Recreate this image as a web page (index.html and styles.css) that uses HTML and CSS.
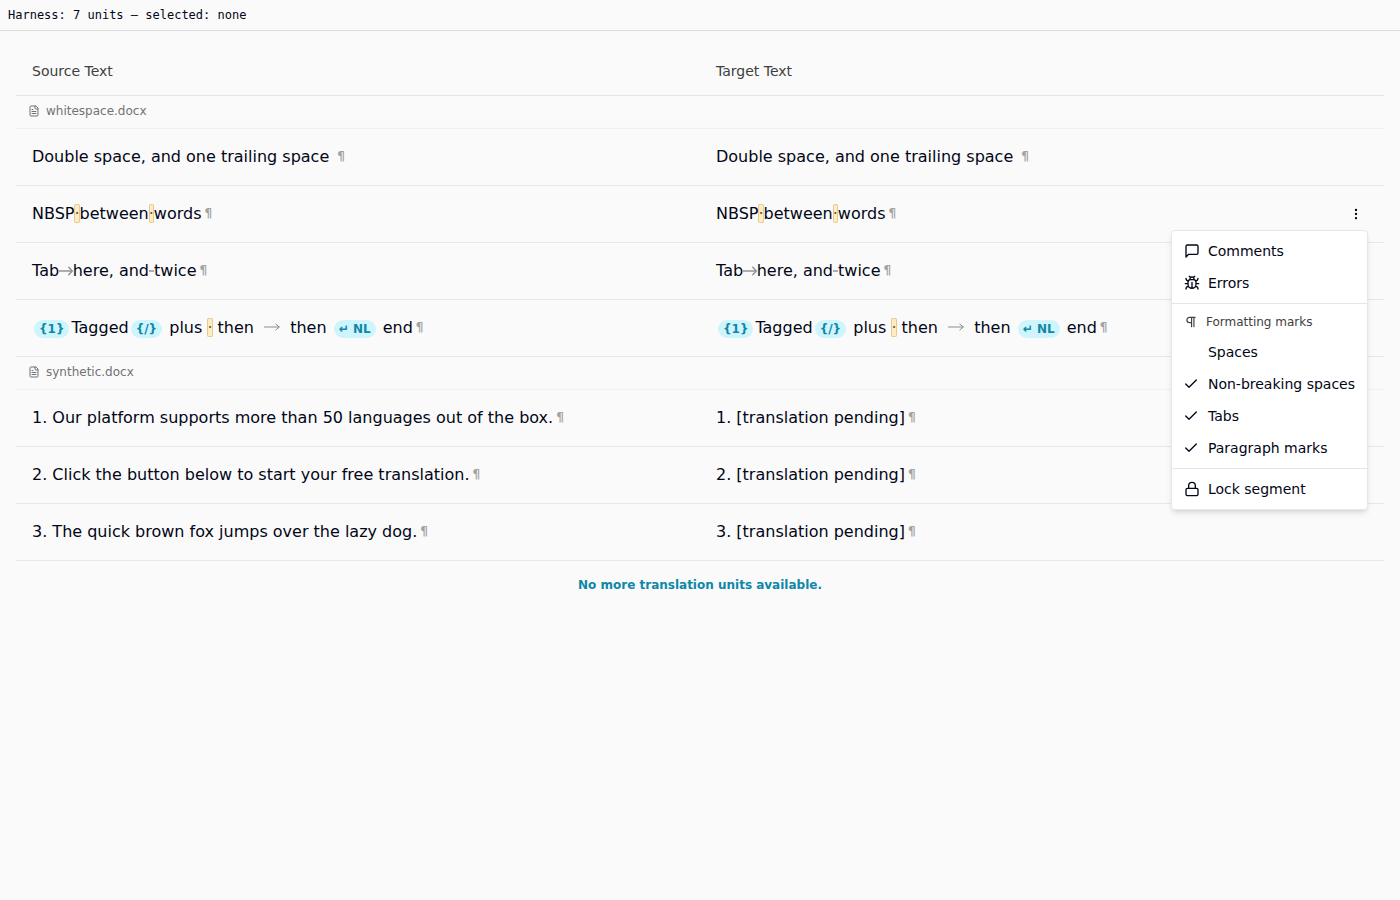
FILE: index.html
```html
<!DOCTYPE html>
<html lang="en">
<head>
<meta charset="utf-8">
<meta name="viewport" content="width=device-width, initial-scale=1">
<title>Translation units</title>
<link rel="stylesheet" href="styles.css">
</head>
<body>
<svg class="sprite" aria-hidden="true">
  <symbol id="file" viewBox="0 0 24 24"><path d="M15 2H6a2 2 0 0 0-2 2v16a2 2 0 0 0 2 2h12a2 2 0 0 0 2-2V7Z"/><path d="M14 2v4a2 2 0 0 0 2 2h4M10 9H8M16 13H8M16 17H8"/></symbol>
  <symbol id="check" viewBox="0 0 24 24"><path d="M20 6 9 17l-5-5"/></symbol>
  <symbol id="arrow" viewBox="0 0 16 8"><path d="M0.5 4H15.2M11.8 1 15.2 4 11.8 7"/></symbol>
  <symbol id="tab-arrow" viewBox="0 0 16 10"><path d="M0 5H14.3M10.8 1.2 14.3 5 10.8 8.8"/></symbol>
</svg>
<header class="status">Harness: 7 units — selected: none</header>
<main class="editor">
  <table class="units">
    <thead>
      <tr><th scope="col">Source Text</th><th scope="col">Target Text</th></tr>
    </thead>
    <tbody>
      <tr class="file-row"><td colspan="2"><div class="file"><svg class="icon file-icon"><use href="#file"/></svg>whitespace.docx</div></td></tr>
      <tr>
        <td>Double space, and one trailing space <span class="para">¶</span></td>
        <td>Double space, and one trailing space <span class="para">¶</span></td>
      </tr>
      <tr>
        <td>NBSP<span class="nbsp">&nbsp;</span>between<span class="nbsp">&nbsp;</span>words<span class="para">¶</span></td>
        <td class="active">NBSP<span class="nbsp">&nbsp;</span>between<span class="nbsp">&nbsp;</span>words<span class="para">¶</span><div class="actions">
          <button class="more" type="button" aria-label="Segment actions" aria-expanded="true"><svg class="icon" viewBox="0 0 24 24"><circle cx="12" cy="12" r="1"/><circle cx="12" cy="5" r="1"/><circle cx="12" cy="19" r="1"/></svg></button>
          <div class="menu" role="menu">
            <div class="group">
              <button class="item" type="button" role="menuitem"><svg class="icon" viewBox="0 0 24 24"><path d="M21 15a2 2 0 0 1-2 2H7l-4 4V5a2 2 0 0 1 2-2h14a2 2 0 0 1 2 2z"/></svg>Comments</button>
              <button class="item" type="button" role="menuitem"><svg class="icon" viewBox="0 0 24 24"><path d="m8 2 1.88 1.88M14.12 3.88 16 2M9 7.13v-1a3.003 3.003 0 1 1 6 0v1M12 20c-3.3 0-6-2.7-6-6v-3a4 4 0 0 1 4-4h4a4 4 0 0 1 4 4v3c0 3.3-2.7 6-6 6M12 20v-9M6.53 9C4.6 8.8 3 7.1 3 5M6 13H2M3 21c0-2.1 1.7-3.9 3.8-4M20.97 5c0 2.1-1.6 3.8-3.5 4M22 13h-4M17.2 17c2.1.1 3.8 1.9 3.8 4"/></svg>Errors</button>
            </div>
            <div class="group">
              <div class="menu-label"><svg class="icon" viewBox="0 0 24 24"><path d="M13 4v16M17 4v16M19 4H9.5a4.5 4.5 0 0 0 0 9H13"/></svg>Formatting marks</div>
              <button class="item check-item" type="button" role="menuitemcheckbox" aria-checked="false"><span class="tick"></span>Spaces</button>
              <button class="item check-item" type="button" role="menuitemcheckbox" aria-checked="true"><span class="tick"><svg class="icon"><use href="#check"/></svg></span>Non-breaking spaces</button>
              <button class="item check-item" type="button" role="menuitemcheckbox" aria-checked="true"><span class="tick"><svg class="icon"><use href="#check"/></svg></span>Tabs</button>
              <button class="item check-item" type="button" role="menuitemcheckbox" aria-checked="true"><span class="tick"><svg class="icon"><use href="#check"/></svg></span>Paragraph marks</button>
            </div>
            <div class="group">
              <button class="item" type="button" role="menuitem"><svg class="icon" viewBox="0 0 24 24"><rect x="3" y="11" width="18" height="11" rx="2"/><path d="M7 11V7a5 5 0 0 1 10 0v4"/></svg>Lock segment</button>
            </div>
          </div>
        </div></td>
      </tr>
      <tr>
        <td>Tab<span class="tab">	<span class="tab-mark"><svg class="icon"><use href="#tab-arrow"/></svg></span></span>here, and<span class="tab">	<span class="tab-mark"><svg class="icon"><use href="#tab-arrow"/></svg></span></span>twice<span class="para">¶</span></td>
        <td>Tab<span class="tab">	<span class="tab-mark"><svg class="icon"><use href="#tab-arrow"/></svg></span></span>here, and<span class="tab">	<span class="tab-mark"><svg class="icon"><use href="#tab-arrow"/></svg></span></span>twice<span class="para">¶</span></td>
      </tr>
      <tr>
        <td><span class="tag">{1}</span>Tagged<span class="tag">{/}</span> plus <span class="nbsp">&nbsp;</span> then <svg class="icon arrow"><use href="#arrow"/></svg> then <span class="tag">↵ NL</span> end<span class="para">¶</span></td>
        <td><span class="tag">{1}</span>Tagged<span class="tag">{/}</span> plus <span class="nbsp">&nbsp;</span> then <svg class="icon arrow"><use href="#arrow"/></svg> then <span class="tag">↵ NL</span> end<span class="para">¶</span></td>
      </tr>
      <tr class="file-row"><td colspan="2"><div class="file"><svg class="icon file-icon"><use href="#file"/></svg>synthetic.docx</div></td></tr>
      <tr>
        <td>1. Our platform supports more than 50 languages out of the box.<span class="para">¶</span></td>
        <td>1. [translation pending]<span class="para">¶</span></td>
      </tr>
      <tr>
        <td>2. Click the button below to start your free translation.<span class="para">¶</span></td>
        <td>2. [translation pending]<span class="para">¶</span></td>
      </tr>
      <tr>
        <td>3. The quick brown fox jumps over the lazy dog.<span class="para">¶</span></td>
        <td>3. [translation pending]<span class="para">¶</span></td>
      </tr>
    </tbody>
  </table>
  <p class="end">No more translation units available.</p>
</main>
</body>
</html>
```
FILE: styles.css
```css
* { box-sizing: border-box; }
body {
  margin: 0;
  background: #fafafa;
  color: #020617;
  font: 16px/24px "DejaVu Sans", sans-serif;
}
.sprite { position: absolute; width: 0; height: 0; }
.icon {
  flex: none;
  width: 16px;
  height: 16px;
  fill: none;
  stroke: currentColor;
  stroke-width: 2;
  stroke-linecap: round;
  stroke-linejoin: round;
}
.status {
  padding: 8px;
  border-bottom: 1px solid #dddddd;
  font: 12px/14px "DejaVu Sans Mono", monospace;
}
.editor { padding: 16px; }
.units {
  width: 100%;
  table-layout: fixed;
  border-collapse: separate;
  border-spacing: 0;
}
.units th {
  height: 49px;
  padding: 0 16px;
  border-bottom: 1px solid #e5e5e5;
  color: #404040;
  font-size: 14px;
  font-weight: 400;
  line-height: 20px;
  text-align: left;
}
.units td {
  padding: 16px;
  border-bottom: 1px solid #e5e7eb;
  white-space: pre-wrap;
  tab-size: 8;
}
.units .file-row td {
  padding: 7px 12px 9px;
  border-color: #f1f1f4;
}
.file {
  display: flex;
  align-items: center;
  gap: 6px;
  height: 16px;
  color: #737373;
  font-size: 12px;
  line-height: 16px;
}
.file-icon { width: 12px; height: 12px; }
.para {
  margin-left: 3px;
  color: #a3a3a3;
  font-size: 12px;
  font-weight: 700;
  vertical-align: 2px;
  line-height: 12px;
}
.nbsp {
  position: relative;
  border-radius: 2px;
  background: #ffedbf;
  box-shadow: inset 0 0 0 1px #e2cb98;
}
.nbsp::before, .tab-mark {
  position: absolute;
  inset: 0;
  display: flex;
  align-items: center;
  justify-content: center;
}
.nbsp::before { content: "·"; color: #5c5648; }
.tab { position: relative; }
.tab-mark { overflow: hidden; color: #949494; }
.tab-mark .icon { height: 10px; stroke-width: 1.5; }
.arrow {
  height: 8px;
  margin: 0 5px;
  color: #8c8c8c;
  stroke-width: 1;
  vertical-align: 2px;
}
.tag {
  display: inline-block;
  margin: 0 2px;
  padding: 0 5px;
  border-radius: 9px;
  background: #cff5fc;
  color: #0e87a8;
  font-size: 12px;
  font-weight: 700;
  line-height: 18px;
}
.active { position: relative; }
.actions { position: absolute; top: 16px; right: 16px; white-space: normal; }
.more {
  display: flex;
  align-items: center;
  justify-content: center;
  width: 24px;
  height: 24px;
  padding: 0;
  border: 0;
  background: none;
  color: inherit;
}
.more .icon { width: 14px; height: 14px; fill: currentColor; }
.menu {
  position: absolute;
  z-index: 1;
  top: 28px;
  right: 0;
  width: max-content;
  border: 1px solid #e5e7eb;
  border-radius: 4px;
  background: #ffffff;
  box-shadow: 0 4px 6px -1px rgb(0 0 0 / 10%), 0 2px 4px -2px rgb(0 0 0 / 10%);
}
.group { padding: 4px 0; }
.group + .group { border-top: 1px solid #e5e5e5; }
.item {
  display: flex;
  align-items: center;
  gap: 8px;
  width: 100%;
  height: 32px;
  padding: 0 12px;
  border: 0;
  background: none;
  color: inherit;
  font: 14px/20px "DejaVu Sans", sans-serif;
  text-align: left;
}
.check-item { gap: 10px; }
.tick { display: flex; justify-content: center; width: 14px; }
.menu-label .icon { width: 14px; height: 14px; }
.menu-label {
  display: flex;
  align-items: center;
  gap: 8px;
  height: 28px;
  padding: 0 12px;
  color: #404040;
  font-size: 12px;
  line-height: 16px;
}
.end {
  margin: 16px 0 0;
  color: #0e87a8;
  font-size: 12px;
  font-weight: 700;
  line-height: 16px;
  text-align: center;
}
```
